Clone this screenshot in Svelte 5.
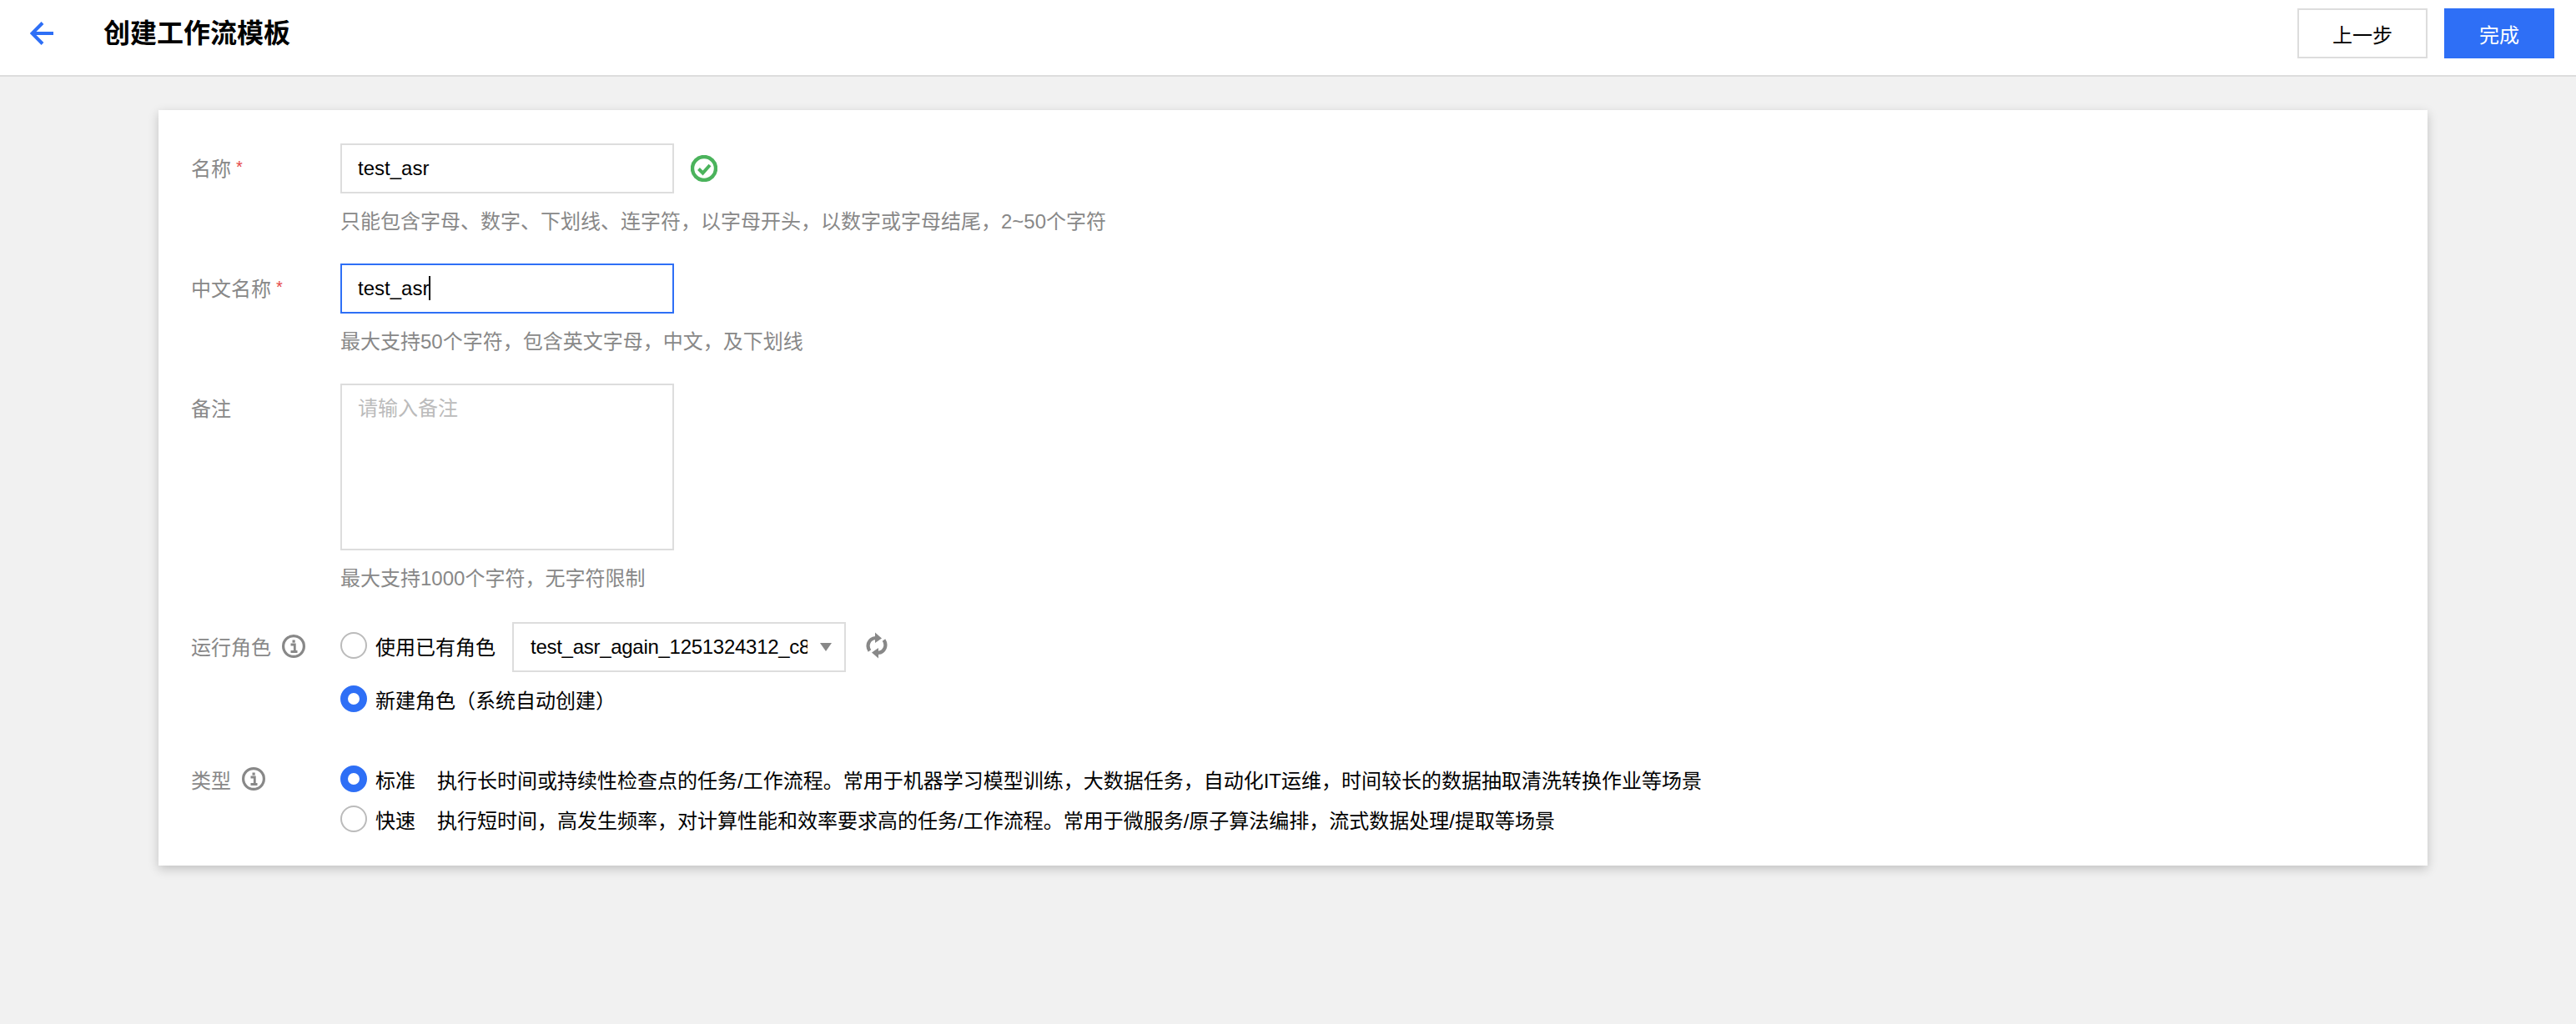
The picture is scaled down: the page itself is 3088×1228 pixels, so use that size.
<script>
  let name = "test_asr";
  let cnName = "test_asr";
  const role = "test_asr_again_1251324312_c8f0a2";
  const types = [
    {
      label: "标准",
      desc: "执行长时间或持续性检查点的任务/工作流程。常用于机器学习模型训练，大数据任务，自动化IT运维，时间较长的数据抽取清洗转换作业等场景",
      checked: true
    },
    {
      label: "快速",
      desc: "执行短时间，高发生频率，对计算性能和效率要求高的任务/工作流程。常用于微服务/原子算法编排，流式数据处理/提取等场景",
      checked: false
    }
  ];
</script>

{#snippet info()}
  <svg class="info" viewBox="0 0 28 28" aria-hidden="true">
    <circle cx="14" cy="14" r="12.400" fill="none" stroke="#888" stroke-width="3.200" />
    <rect x="12.500" y="6.500" width="3.200" height="3.200" fill="#888" />
    <path d="M10.500 12h4.800v8M10.500 20.500h8" fill="none" stroke="#888" stroke-width="2.800" />
  </svg>
{/snippet}

<div class="page">
  <header class="topbar">
    <svg class="back" viewBox="0 0 28 28" aria-hidden="true">
      <path d="M28 14H3M15 1.500L2.500 14L15 26.500" fill="none" stroke="#2e6ff6" stroke-width="4" />
    </svg>
    <h1>创建工作流模板</h1>
    <div class="actions">
      <button class="btn">上一步</button>
      <button class="btn primary">完成</button>
    </div>
  </header>

  <main class="card">
    <div class="row">
      <div class="label">名称<span class="req">*</span></div>
      <div class="field">
        <div class="inline">
          <input class="text" bind:value={name} />
          <svg class="ok" viewBox="0 0 32 32" aria-hidden="true">
            <circle cx="16" cy="16" r="14" fill="none" stroke="#4bb35c" stroke-width="4.400" />
            <path d="M9.500 16.500l5 5l8.500-9.500" fill="none" stroke="#4bb35c" stroke-width="4" />
          </svg>
        </div>
        <p class="hint">只能包含字母、数字、下划线、连字符，以字母开头，以数字或字母结尾，2~50个字符</p>
      </div>
    </div>

    <div class="row">
      <div class="label">中文名称<span class="req">*</span></div>
      <div class="field">
        <div class="inline focus-wrap">
          <input class="text focus" bind:value={cnName} />
          <span class="caret"></span>
        </div>
        <p class="hint">最大支持50个字符，包含英文字母，中文，及下划线</p>
      </div>
    </div>

    <div class="row">
      <div class="label">备注</div>
      <div class="field">
        <textarea class="area" placeholder="请输入备注"></textarea>
        <p class="hint">最大支持1000个字符，无字符限制</p>
      </div>
    </div>

    <div class="row role-row">
      <div class="label">运行角色{@render info()}</div>
      <div class="field">
        <div class="inline">
          <span class="radio first"></span>
          <span class="opt first">使用已有角色</span>
          <div class="select">
            <span class="select-text">{role}</span>
            <span class="tri"></span>
          </div>
          <svg class="refresh" viewBox="0 0 26 32" aria-hidden="true">
            <path d="M4.500 22.500C0.500 16.500 3 8 11.500 7" fill="none" stroke="#888" stroke-width="4.200" />
            <path d="M11 0.500L19 7.500L11 13Z" fill="#888" />
            <path d="M21.500 9.500C25.500 15.500 23 24 14.500 25" fill="none" stroke="#888" stroke-width="4.200" />
            <path d="M15 31.500L7 24.500L15 19Z" fill="#888" />
          </svg>
        </div>
        <div class="inline new-role">
          <span class="radio on"></span>
          <span class="opt">新建角色（系统自动创建）</span>
        </div>
      </div>
    </div>

    <div class="row type-row">
      <div class="label">类型{@render info()}</div>
      <div class="field">
        {#each types as t}
          <div class="inline type">
            <span class="radio" class:on={t.checked}></span>
            <span class="opt">{t.label}</span>
            <span class="desc">{t.desc}</span>
          </div>
        {/each}
      </div>
    </div>
  </main>
</div>

<style>
  :global(body) {
    background: #f1f1f1;
  }

  .page {
    min-height: 1228px;
    font-family: "Liberation Sans", "Noto Sans CJK SC", sans-serif;
    font-size: 24px;
    color: #000;
  }

  .topbar {
    display: flex;
    align-items: center;
    height: 60px;
    padding: 10px 26px 20px 36px;
    background: #fff;
    border-bottom: 2px solid #ddd;
  }

  .back {
    width: 28px;
    height: 28px;
    margin-right: 60px;
  }

  h1 {
    margin: 0;
    font-size: 32px;
    font-weight: 700;
    line-height: 44px;
  }

  .actions {
    display: flex;
    gap: 20px;
    margin-left: auto;
  }

  .btn {
    height: 60px;
    padding: 0 40px;
    border: 2px solid #ddd;
    border-radius: 0;
    background: #fff;
    color: #000;
    font: inherit;
  }

  .btn.primary {
    background: #2e6ff6;
    border-color: #2e6ff6;
    color: #fff;
  }

  .card {
    width: 2720px;
    height: 906px;
    box-sizing: border-box;
    margin: 40px 0 0 190px;
    padding: 40px 39px 32px;
    background: #fff;
    box-shadow: 0 4px 12px rgba(0, 0, 0, 0.2);
  }

  .row {
    display: grid;
    grid-template-columns: 179px 1fr;
    margin-bottom: 32px;
  }

  .label {
    display: flex;
    align-items: center;
    align-self: start;
    height: 60px;
    box-sizing: border-box;
    padding-bottom: 3px;
    color: #888;
  }

  .req {
    margin-left: 6px;
    color: #e54545;
    font-size: 20px;
  }

  .inline {
    display: flex;
    align-items: center;
  }

  .text {
    width: 400px;
    height: 60px;
    box-sizing: border-box;
    padding: 0 19px;
    border: 2px solid #ddd;
    border-radius: 0;
    outline: none;
    font: inherit;
    color: #000;
  }

  .text.focus {
    border-color: #2e6ff6;
  }

  .focus-wrap {
    position: relative;
  }

  .caret {
    position: absolute;
    left: 106px;
    top: 15px;
    width: 2px;
    height: 29px;
    background: #000;
  }

  .ok {
    width: 32px;
    height: 32px;
    margin-left: 20px;
  }

  .hint {
    margin: 16px 0 0;
    line-height: 36px;
    color: #888;
  }

  .area {
    display: block;
    width: 400px;
    height: 200px;
    box-sizing: border-box;
    padding: 10px 19px;
    border: 2px solid #ddd;
    border-radius: 0;
    outline: none;
    resize: none;
    font: inherit;
    line-height: 36px;
  }

  .area::placeholder {
    color: #bbb;
  }

  .role-row {
    margin-top: 34px;
    margin-bottom: 40px;
  }

  .label :global(.info) {
    width: 28px;
    height: 28px;
    margin-left: 13px;
  }

  .radio {
    flex: none;
    width: 32px;
    height: 32px;
    box-sizing: border-box;
    margin-right: 10px;
    border: 2px solid #bbb;
    border-radius: 50%;
    background: #fff;
  }

  .radio.first {
    margin-bottom: 4px;
  }

  .opt.first {
    margin-bottom: 3px;
  }

  .radio.on {
    border: 9px solid #2e6ff6;
  }

  .select {
    display: flex;
    align-items: center;
    width: 400px;
    height: 60px;
    box-sizing: border-box;
    margin-left: 20px;
    padding: 0 15px 0 20px;
    border: 2px solid #ddd;
  }

  .select-text {
    flex: 1;
    overflow: hidden;
    white-space: nowrap;
    letter-spacing: -0.28px;
  }

  .tri {
    width: 0;
    height: 0;
    margin-left: 15px;
    border-style: solid;
    border-width: 10px 7px 0;
    border-color: #888 transparent transparent;
  }

  .refresh {
    width: 26px;
    height: 32px;
    margin-left: 24px;
    margin-bottom: 4px;
  }

  .new-role {
    height: 64px;
  }

  .type-row .label {
    height: 48px;
    padding-bottom: 0;
  }

  .type {
    height: 48px;
  }

  .desc {
    margin-left: 26px;
  }
</style>
